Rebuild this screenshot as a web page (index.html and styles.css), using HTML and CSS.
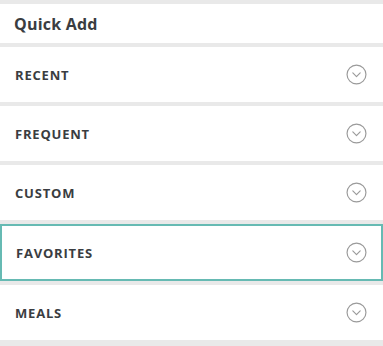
FILE: index.html
```html
<!DOCTYPE html>
<html>
<head>
<meta charset="utf-8">
<link rel="stylesheet" href="styles.css">
</head>
<body>
<div class="panel">
  <div class="header">Quick Add</div>
  <div class="row"><span class="label">RECENT</span><svg class="chev" viewBox="0 0 20 20"><circle cx="10" cy="10" r="9" /><path d="M6.5 8.5 L10 12 L13.5 8.5" /></svg></div>
  <div class="row"><span class="label">FREQUENT</span><svg class="chev" viewBox="0 0 20 20"><circle cx="10" cy="10" r="9" /><path d="M6.5 8.5 L10 12 L13.5 8.5" /></svg></div>
  <div class="row"><span class="label">CUSTOM</span><svg class="chev" viewBox="0 0 20 20"><circle cx="10" cy="10" r="9" /><path d="M6.5 8.5 L10 12 L13.5 8.5" /></svg></div>
  <div class="row active"><span class="label">FAVORITES</span><svg class="chev" viewBox="0 0 20 20"><circle cx="10" cy="10" r="9" /><path d="M6.5 8.5 L10 12 L13.5 8.5" /></svg></div>
  <div class="row"><span class="label">MEALS</span><svg class="chev" viewBox="0 0 20 20"><circle cx="10" cy="10" r="9" /><path d="M6.5 8.5 L10 12 L13.5 8.5" /></svg></div>
</div>
</body>
</html>
```
FILE: styles.css
```css
html, body {
  margin: 0;
  padding: 0;
  background: #e9e9e9;
}
body {
  width: 383px;
  height: 346px;
  overflow: hidden;
  font-family: "Open Sans", "Liberation Sans", sans-serif;
  color: #3a3d41;
}
.panel {
  display: flex;
  flex-direction: column;
  gap: 4px;
  padding-top: 4px;
}
.header {
  background: #fff;
  height: 39px;
  display: flex;
  align-items: center;
  padding-left: 14px;
  font-size: 16px;
  font-weight: 700;
  letter-spacing: 0.2px;
}
.row {
  background: #fff;
  height: 55px;
  display: flex;
  align-items: center;
  justify-content: space-between;
  padding: 0 16px 0 15px;
  box-sizing: border-box;
}
.row.active {
  height: 57px;
  border: 2px solid #66bab3;
  padding: 0 14px 0 14px;
}
.label {
  font-size: 13px;
  font-weight: 700;
  letter-spacing: 0.8px;
}
.chev {
  width: 21px;
  height: 21px;
  fill: none;
  stroke: #9a9a9a;
  stroke-width: 1.1;
}
.chev path {
  stroke-linecap: round;
  stroke-linejoin: round;
}
```
